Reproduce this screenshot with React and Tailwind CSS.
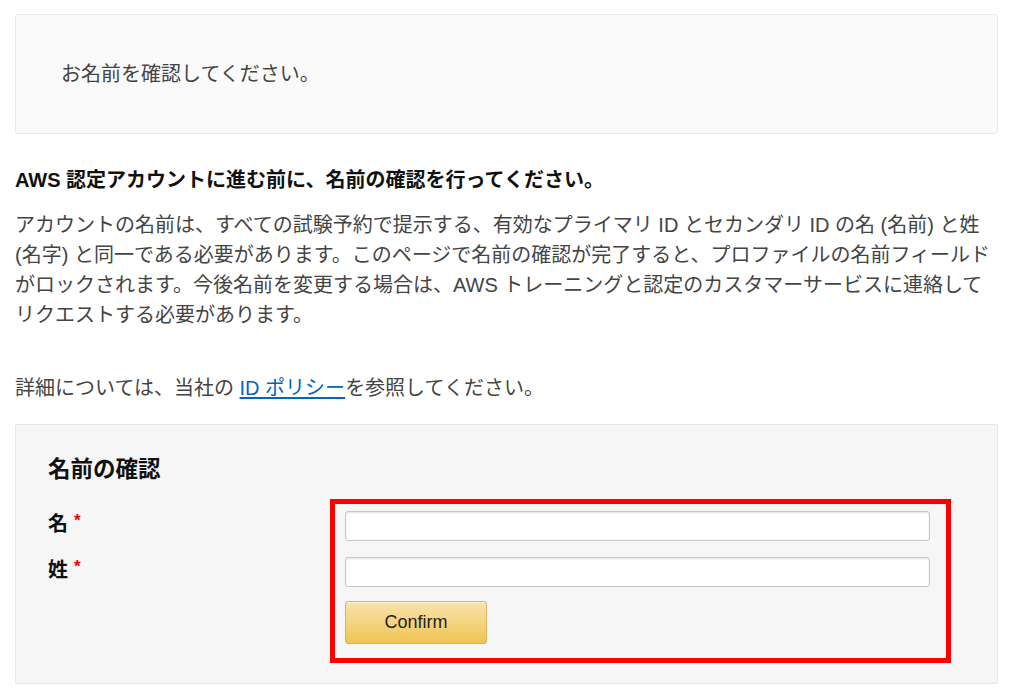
const font = "font-['Liberation_Sans','Noto_Sans_CJK_JP',sans-serif]";

function NameInput() {
  return (
    <input
      type="text"
      className="block h-[30px] w-[585px] rounded-[3px] border border-[#c6c6c6] bg-white px-2 shadow-[inset_0_1px_2px_rgba(0,0,0,0.12)] outline-none"
    />
  );
}

export default function App() {
  return (
    <div className={`${font} min-h-screen bg-white pt-[14px] pl-[15px] pr-[22px] text-[#333]`}>
      <div className="flex h-[120px] items-center rounded-[3px] border border-[#e8e8e8] bg-[#fafafa] pl-[45px] text-[20px] text-[#444]">
        お名前を確認してください。
      </div>

      <h2 className="mt-[32px] text-[20px] font-bold leading-[28px] text-[#111]">
        AWS 認定アカウントに進む前に、名前の確認を行ってください。
      </h2>

      <p className="mt-[16px] text-[20px] leading-[30px] text-[#444]">
        アカウントの名前は、すべての試験予約で提示する、有効なプライマリ ID とセカンダリ ID の名 (名前) と姓
        <br />
        (名字) と同一である必要があります。このページで名前の確認が完了すると、プロファイルの名前フィールド
        <br />
        がロックされます。今後名前を変更する場合は、AWS トレーニングと認定のカスタマーサービスに連絡して
        <br />
        リクエストする必要があります。
      </p>

      <p className="mt-[43px] text-[20px] leading-[30px] text-[#444]">
        詳細については、当社の{" "}
        <a href="#" className="text-[#0066c0] underline underline-offset-2">
          ID ポリシー
        </a>
        を参照してください。
      </p>

      <div className="mt-[21px] rounded-[2px] border border-[#e6e6e6] bg-[#f6f6f6] pt-[31px] pb-[20px] pl-[32px]">
        <h3 className="text-[22.5px] font-bold leading-[28px] text-[#111]">名前の確認</h3>

        <div className="mt-[15px] flex">
          <div className="flex w-[282px] flex-col gap-[18px] pt-[11px] text-[20px] font-bold leading-[28px] text-[#111]">
            <div>
              名<span className="ml-[6px] align-top text-[17px] leading-[22px] text-[#e00]">*</span>
            </div>
            <div>
              姓<span className="ml-[6px] align-top text-[17px] leading-[22px] text-[#e00]">*</span>
            </div>
          </div>

          <div className="w-[621px] border-[5px] border-[#ff0000] pt-[7px] pb-[14px] pl-[10px]">
            <NameInput />
            <div className="mt-[16px]">
              <NameInput />
            </div>
            <button
              type="button"
              className="mt-[14px] h-[43px] w-[142px] rounded-[3px] border border-[#d2b55e] bg-gradient-to-b from-[#f8e3a9] to-[#f0c44e] text-[18px] text-[#222] shadow-[0_1px_0_rgba(255,255,255,0.6)_inset]"
            >
              Confirm
            </button>
          </div>
        </div>
      </div>
    </div>
  );
}
